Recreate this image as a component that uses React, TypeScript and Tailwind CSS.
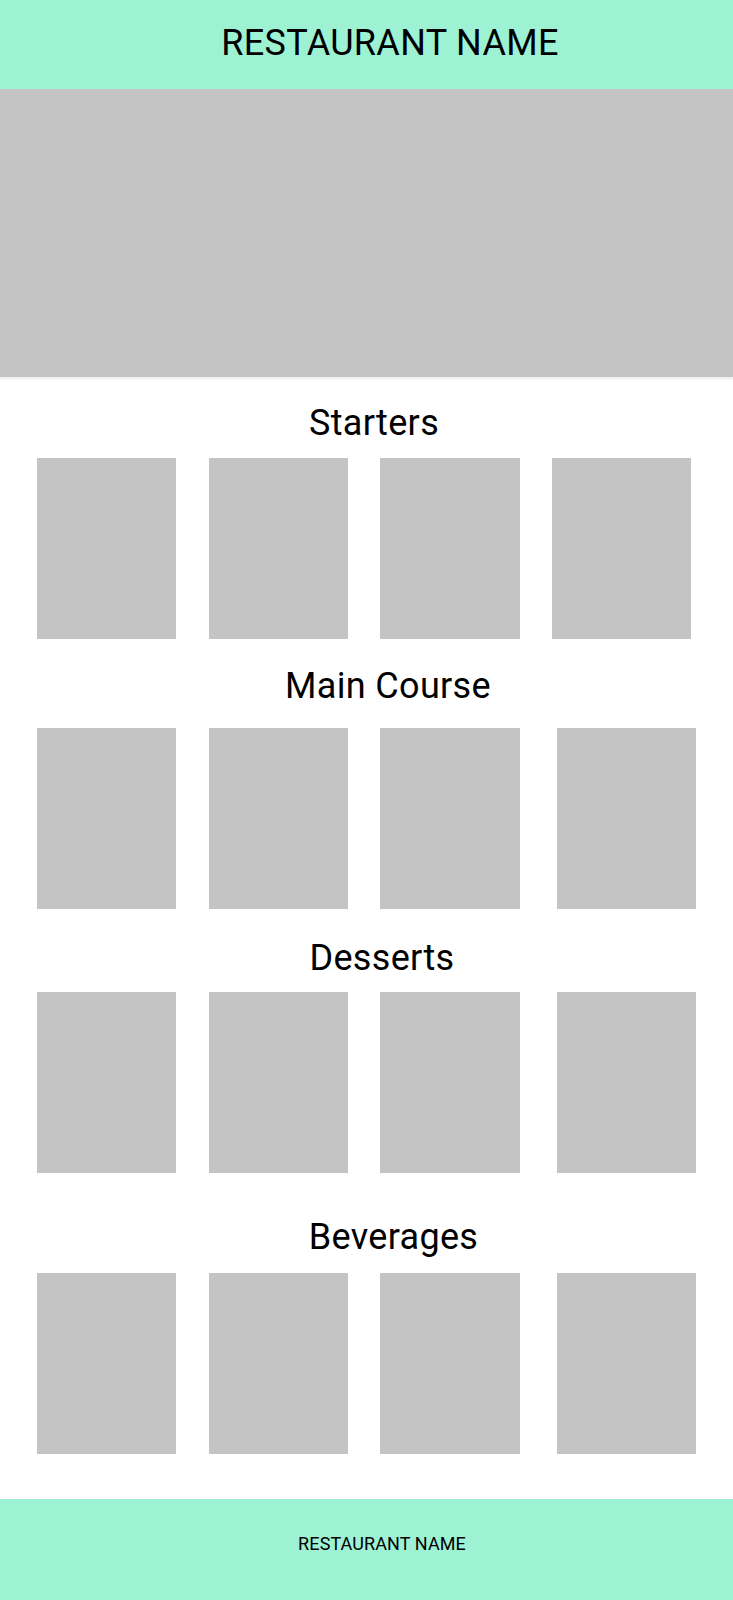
import React from "react";

const font = { fontFamily: "Roboto, 'Noto Sans', sans-serif" };

function Row({ last }: { last?: boolean }) {
  return (
    <div className="flex gap-[32.33px] pl-[37px]">
      <div className="w-[139.33px] h-[181px] bg-[#c4c4c4]" />
      <div className="w-[139.33px] h-[181px] bg-[#c4c4c4]" />
      <div className="w-[139.33px] h-[181px] bg-[#c4c4c4]" />
      <div className={"w-[139.33px] h-[181px] bg-[#c4c4c4] " + (last ? "ml-[5px]" : "")} />
    </div>
  );
}

export default function App() {
  return (
    <div className="w-[733px] h-[1600px] bg-white flex flex-col text-black overflow-hidden" style={font}>
      <header className="h-[89px] bg-[#9ef2d4] shrink-0">
        <h1 className="pt-[24.5px] pl-[47px] text-center text-[36px] leading-[36px] font-normal tracking-[0.33px]">
          RESTAURANT NAME
        </h1>
      </header>
      <div className="h-[288px] bg-[#c4c4c4] shrink-0 shadow-[0_2px_2px_rgba(0,0,0,0.08)] relative z-10" />

      <h2 className="mt-[28px] pl-[15px] text-center text-[36px] leading-[36px] font-normal tracking-[0.33px]">Starters</h2>
      <div className="mt-[17px]">
        <Row />
      </div>

      <h2 className="mt-[29px] pl-[43px] text-center text-[36px] leading-[36px] font-normal tracking-[0.33px]">Main Course</h2>
      <div className="mt-[24px]">
        <Row last />
      </div>

      <h2 className="mt-[31px] pl-[31px] text-center text-[36px] leading-[36px] font-normal tracking-[0.33px]">Desserts</h2>
      <div className="mt-[16px]">
        <Row last />
      </div>

      <h2 className="mt-[46px] pl-[54px] text-center text-[36px] leading-[36px] font-normal tracking-[0.33px]">Beverages</h2>
      <div className="mt-[18px]">
        <Row last />
      </div>

      <footer className="mt-[45px] h-[102px] bg-[#9ef2d4] shrink-0">
        <p className="pt-[35.5px] pl-[31px] text-center text-[18px] leading-[18px] tracking-[0.1px]">RESTAURANT NAME</p>
      </footer>
    </div>
  );
}
